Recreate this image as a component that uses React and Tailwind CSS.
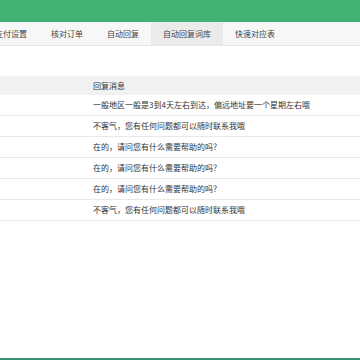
import React from 'react'

const tabs = ['支付设置', '核对订单', '自动回复', '自动回复词库', '快速对应表']

const replies = [
    '一般地区一般是3到4天左右到达，偏远地址要一个星期左右哦',
    '不客气，您有任何问题都可以随时联系我哦',
    '在的，请问您有什么需要帮助的吗？',
    '在的，请问您有什么需要帮助的吗？',
    '在的，请问您有什么需要帮助的吗？',
    '不客气，您有任何问题都可以随时联系我哦',
]

export default function App() {
    return (
        <div
            className="w-[360px] h-[360px] bg-white flex flex-col overflow-hidden text-[#333] text-[8px]"
            style={{ fontFamily: '"Noto Sans CJK SC", "Noto Sans", sans-serif' }}
        >
            <div className="h-[22px] bg-[#40b374] shrink-0" />

            <div className="h-[24px] bg-[#f7f7f7] border-b border-[#e6e6e6] flex shrink-0">
                <div className="flex ml-[-17px]">
                    {tabs.map((t) => (
                        <div
                            key={t}
                            className={
                                t === '自动回复词库'
                                    ? 'px-[12px] flex items-center bg-[#ebebeb] text-[#444]'
                                    : 'px-[12px] flex items-center text-[#444]'
                            }
                        >
                            {t}
                        </div>
                    ))}
                </div>
            </div>

            <div className="mt-[30px] flex flex-col">
                <div className="h-[19px] bg-[#f2f2f2] flex items-center">
                    <div className="w-[85px]" />
                    <div className="pl-[8px]">回复消息</div>
                </div>
                {replies.map((r, i) => (
                    <div key={i} className="h-[21px] border-b border-[#e8e8e8] flex items-center">
                        <div className="w-[85px]" />
                        <div className="pl-[8px]">{r}</div>
                    </div>
                ))}
            </div>

            <div className="flex-1" />
            <div className="h-[2px] bg-[#3d9171] shrink-0" />
        </div>
    )
}
